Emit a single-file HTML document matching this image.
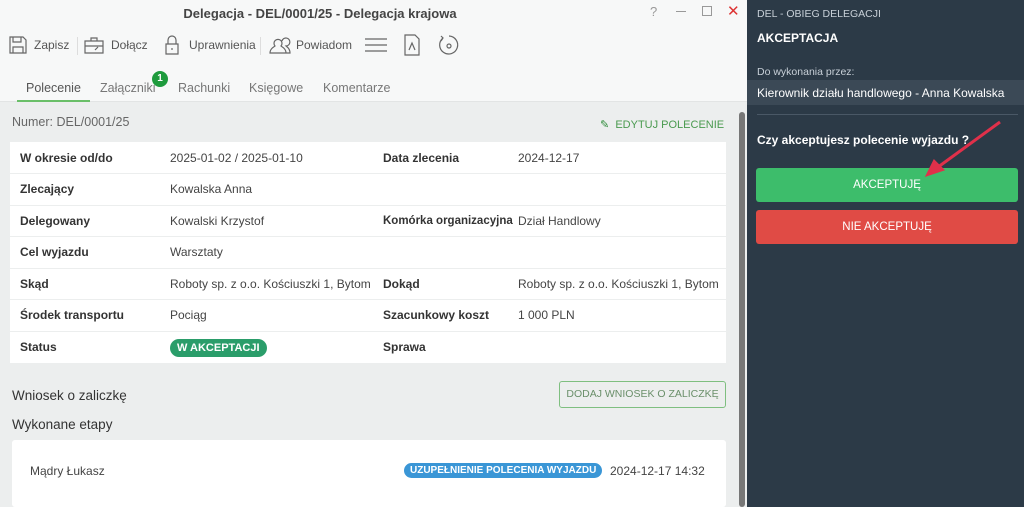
<!DOCTYPE html>
<html><head><meta charset="utf-8"><style>
*{margin:0;padding:0;box-sizing:border-box}
body{width:1024px;height:507px;overflow:hidden;font-family:"Liberation Sans",sans-serif;background:#eceeee;position:relative;color:#333}
.abs{position:absolute}
.top{left:0;top:0;width:747px;height:102px;background:#f7f8f8;border-bottom:1px solid #e2e4e4}
.title{left:0;width:640px;top:6px;text-align:center;font-size:13px;font-weight:bold;color:#444}
.tb{top:38px;font-size:12px;color:#555;display:flex;align-items:center}
.tab{top:81px;font-size:12.5px;color:#777}
.panel{left:747px;top:0;width:277px;height:507px;background:#2c3a47;color:#fff}
table{border-collapse:collapse;background:#fff;table-layout:fixed}
td{height:31.5px;font-size:12px;border-bottom:1px solid #eceeee;color:#444;white-space:nowrap;overflow:hidden}
td.l{font-weight:bold;color:#333}
svg{stroke:#666;fill:none;stroke-width:1.2}
</style></head><body>
<div class="abs top"></div>
<div class="abs title">Delegacja - DEL/0001/25 - Delegacja krajowa</div>
<div class="abs" style="left:650px;top:4px;font-size:13px;color:#999">?</div>
<div class="abs" style="left:676px;top:11px;width:10px;height:1px;background:#999"></div>
<div class="abs" style="left:702px;top:6px;width:10px;height:10px;border:1px solid #999"></div>
<div class="abs" style="left:727px;top:2px;font-size:15px;color:#d33">✕</div>

<svg class="abs" style="left:8px;top:35px" width="20" height="20"><path d="M2 2h13l3 3v13H2z M5 2v5h8V2 M5 18v-6h10v6"/></svg>
<div class="abs tb" style="left:34px">Zapisz</div>
<div class="abs" style="left:77px;top:37px;width:1px;height:18px;background:#ddd"></div>
<svg class="abs" style="left:83px;top:35px" width="22" height="20"><path d="M2 6h18v12H2z M8 6V3h6v3 M2 11h18 M12 15l3-3"/></svg>
<div class="abs tb" style="left:111px">Dołącz</div>
<svg class="abs" style="left:163px;top:34px" width="18" height="22"><path d="M3 10h12v10H3z M5 10V6a4 4 0 0 1 8 0v4 M9 14v2"/></svg>
<div class="abs tb" style="left:189px">Uprawnienia</div>
<div class="abs" style="left:260px;top:37px;width:1px;height:18px;background:#ddd"></div>
<svg class="abs" style="left:268px;top:35px" width="24" height="20"><path d="M2 18c0-5 4-6 5-7a4 4 0 1 1 6 0c1 1 5 2 5 7z M14 6a4 4 0 1 1 4 5c1 1 4 2 4 7h-4"/></svg>
<div class="abs tb" style="left:296px">Powiadom</div>
<svg class="abs" style="left:365px;top:37px" width="22" height="16"><path d="M0 2h22M0 8h22M0 14h22"/></svg>
<svg class="abs" style="left:403px;top:34px" width="18" height="22"><path d="M2 1h10l4 4v16H2z M6 16l3-7 3 7"/></svg>
<svg class="abs" style="left:438px;top:34px" width="22" height="22"><path d="M5 4a9 9 0 1 0 6-2 M3 2l2 2-2 3"/><circle cx="11" cy="12" r="2"/></svg>

<div class="abs tab" style="left:26px;color:#555">Polecenie</div>
<div class="abs" style="left:17px;top:100px;width:73px;height:2px;background:#6abf69"></div>
<div class="abs tab" style="left:100px">Załączniki</div>
<div class="abs" style="left:152px;top:71px;width:16px;height:16px;border-radius:8px;background:#1e9b3d;color:#fff;font-size:10px;font-weight:bold;text-align:center;line-height:16px">1</div>
<div class="abs tab" style="left:178px">Rachunki</div>
<div class="abs tab" style="left:249px">Księgowe</div>
<div class="abs tab" style="left:323px">Komentarze</div>

<div class="abs" style="left:12px;top:115px;font-size:12.5px;color:#666">Numer: DEL/0001/25</div>
<div class="abs" style="left:600px;top:118px;font-size:11px;color:#4a9a4f"><span style="color:#2e8b3a">✎</span>&nbsp; EDYTUJ POLECENIE</div>

<table class="abs" style="left:10px;top:142px;width:716px">
<colgroup><col style="width:160px"><col style="width:213px"><col style="width:135px"><col></colgroup>
<tr><td class="l" style="padding-left:10px">W okresie od/do</td><td>2025-01-02 / 2025-01-10</td><td class="l">Data zlecenia</td><td>2024-12-17</td></tr>
<tr><td class="l" style="padding-left:10px">Zlecający</td><td>Kowalska Anna</td><td></td><td></td></tr>
<tr><td class="l" style="padding-left:10px">Delegowany</td><td>Kowalski Krzystof</td><td class="l" style="font-size:11.5px">Komórka organizacyjna</td><td>Dział Handlowy</td></tr>
<tr><td class="l" style="padding-left:10px">Cel wyjazdu</td><td>Warsztaty</td><td></td><td></td></tr>
<tr><td class="l" style="padding-left:10px">Skąd</td><td>Roboty sp. z o.o. Kościuszki 1, Bytom</td><td class="l">Dokąd</td><td>Roboty sp. z o.o. Kościuszki 1, Bytom</td></tr>
<tr><td class="l" style="padding-left:10px">Środek transportu</td><td>Pociąg</td><td class="l">Szacunkowy koszt</td><td>1 000 PLN</td></tr>
<tr><td class="l" style="padding-left:10px;border:0">Status</td><td style="border:0"><span style="background:#2a9d6a;color:#fff;font-weight:bold;font-size:11px;padding:3px 7px;border-radius:10px">W AKCEPTACJI</span></td><td class="l" style="border:0">Sprawa</td><td style="border:0"></td></tr>
</table>

<div class="abs" style="left:12px;top:388px;font-size:13.5px;color:#333">Wniosek o zaliczkę</div>
<div class="abs" style="left:559px;top:381px;width:167px;height:27px;border:1px solid #7fbf80;border-radius:3px;font-size:10.5px;color:#6a8f6a;text-align:center;line-height:25px">DODAJ WNIOSEK O ZALICZKĘ</div>
<div class="abs" style="left:12px;top:417px;font-size:13.5px;color:#333">Wykonane etapy</div>
<div class="abs" style="left:12px;top:440px;width:714px;height:67px;background:#fff;border-radius:3px"></div>
<div class="abs" style="left:30px;top:464px;font-size:12px;color:#444">Mądry Łukasz</div>
<div class="abs" style="left:404px;top:463px;background:#3a96d6;color:#fff;font-weight:bold;font-size:10px;padding:2px 6px;border-radius:9px">UZUPEŁNIENIE POLECENIA WYJAZDU</div>
<div class="abs" style="left:610px;top:464px;font-size:12px;color:#444">2024-12-17 14:32</div>

<div class="abs" style="left:739px;top:112px;width:6px;height:395px;background:#777;border-radius:3px"></div>

<div class="abs panel"></div>
<div class="abs" style="left:757px;top:8px;font-size:10.5px;color:#c8d0d8">DEL - OBIEG DELEGACJI</div>
<div class="abs" style="left:757px;top:31px;font-size:12px;font-weight:bold;color:#fff">AKCEPTACJA</div>
<div class="abs" style="left:757px;top:66px;font-size:10.5px;color:#c8d0d8">Do wykonania przez:</div>
<div class="abs" style="left:747px;top:80px;width:277px;height:25px;background:#3b4956"></div>
<div class="abs" style="left:757px;top:86px;font-size:12px;color:#fff">Kierownik działu handlowego - Anna Kowalska</div>
<div class="abs" style="left:757px;top:114px;width:261px;height:1px;background:#4a5866"></div>
<div class="abs" style="left:757px;top:133px;font-size:12px;font-weight:bold;color:#fff">Czy akceptujesz polecenie wyjazdu ?</div>
<div class="abs" style="left:756px;top:168px;width:262px;height:34px;background:#3dbd6b;border-radius:3px;color:#fff;font-size:11.5px;text-align:center;line-height:34px">AKCEPTUJĘ</div>
<div class="abs" style="left:756px;top:210px;width:262px;height:34px;background:#e04b45;border-radius:3px;color:#fff;font-size:11.5px;text-align:center;line-height:34px">NIE AKCEPTUJĘ</div>
<svg class="abs" style="left:920px;top:118px" width="85" height="62"><path d="M80 4L14 52" stroke="#e0304a" stroke-width="3"/><path d="M6 58l8-16 10 10z" fill="#e0304a" stroke="#e0304a"/></svg>
</body></html>
